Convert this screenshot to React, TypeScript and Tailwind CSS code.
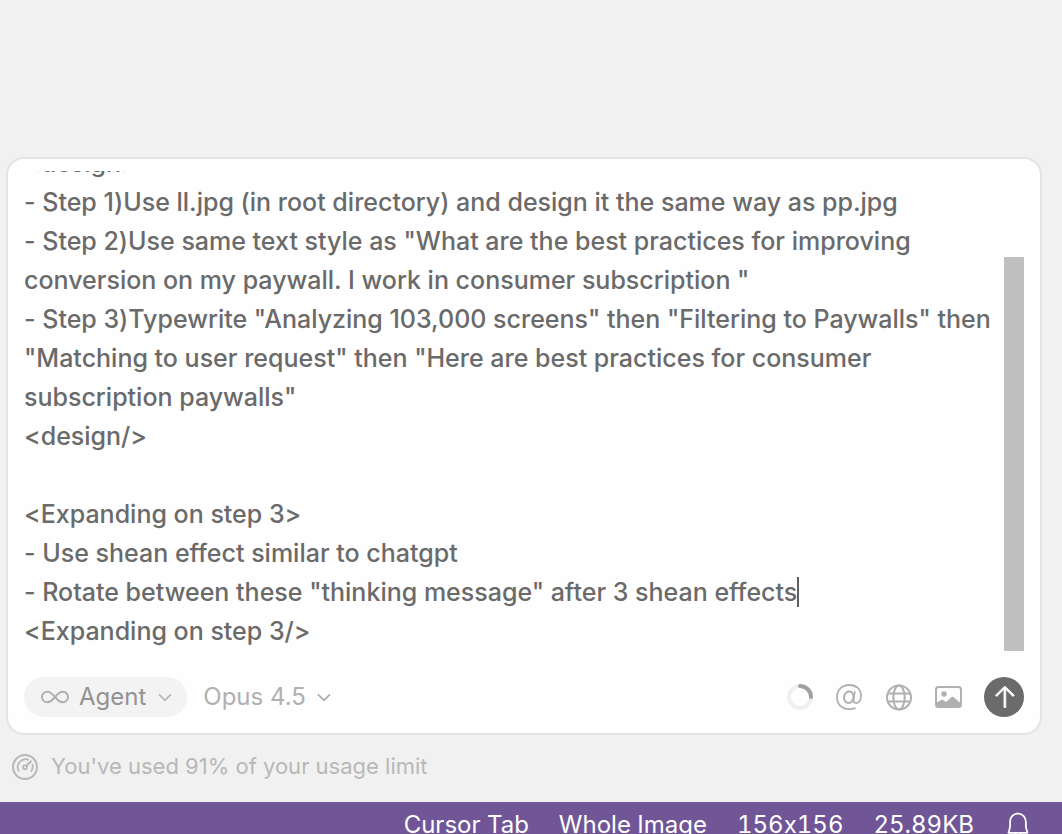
import { useLayoutEffect, useRef, useState } from "react";
import { VscArrowUp, VscBell, VscChevronDown } from "react-icons/vsc";

const PROMPT = `

<design>
- Step 1)Use ll.jpg (in root directory) and design it the same way as pp.jpg
- Step 2)Use same text style as "What are the best practices for improving conversion on my paywall. I work in consumer subscription "
- Step 3)Typewrite "Analyzing 103,000 screens" then "Filtering to Paywalls" then "Matching to user request" then "Here are best practices for consumer subscription paywalls"
<design/>

<Expanding on step 3>
- Use shean effect similar to chatgpt
- Rotate between these "thinking message" after 3 shean effects
<Expanding on step 3/>`;

const STATUS_ITEMS = ["Cursor Tab", "Whole Image", "156x156", "25.89KB"];

export default function App() {
  return (
    <div className="flex h-screen flex-col overflow-hidden bg-[#f1f1f1] pt-[157px] font-['Inter',sans-serif] [font-feature-settings:'calt'_0]">
      <main className="shrink-0 pl-[6px] pr-5">
        <Composer />
        <div className="flex h-[67px] items-center gap-3 pb-1 pl-[5px] text-[22px] text-[#b8b8b8]">
          <GaugeIcon />
          <p>You've used 91% of your usage limit</p>
        </div>
      </main>
      <StatusBar />
    </div>
  );
}

function Composer() {
  return (
    <form
      className="rounded-[18px] border-2 border-[#e4e4e4] bg-[#fefefe] px-4 pb-4 pt-3"
      onSubmit={(e) => e.preventDefault()}
    >
      <PromptInput />
      <div className="mt-[26px] flex h-10 items-center justify-between">
        <div className="flex items-center gap-4 text-[24px]">
          <button type="button" className="flex h-10 items-center gap-[9px] rounded-full bg-[#f3f3f3] pl-4 pr-3 text-[#929292]">
            <InfinityIcon />
            Agent
            <VscChevronDown className="size-[20px] text-[#b0b0b0]" strokeWidth="0.500" />
          </button>
          <button type="button" className="flex h-10 items-center gap-2 text-[#b0b0b0]">
            Opus 4.5
            <VscChevronDown className="size-[20px] text-[#a0a0a0]" strokeWidth="0.500" />
          </button>
        </div>
        <div className="flex items-center gap-[22px] text-[#b0b0b0]">
          <button type="button" aria-label="Context usage">
            <UsageRing />
          </button>
          <button type="button" aria-label="Mention">
            <MentionIcon />
          </button>
          <button type="button" aria-label="Browser">
            <GlobeIcon />
          </button>
          <button type="button" aria-label="Attach image">
            <ImageIcon />
          </button>
          <button
            type="button"
            aria-label="Send"
            className="flex size-10 items-center justify-center rounded-full bg-[#6b6b6b] text-white"
          >
            <VscArrowUp className="size-7" strokeWidth="0.500" />
          </button>
        </div>
      </div>
    </form>
  );
}

function PromptInput() {
  const ref = useRef<HTMLTextAreaElement>(null);
  const [thumb, setThumb] = useState({ top: 0, height: 0 });

  const syncThumb = () => {
    const el = ref.current;
    if (!el) return;
    const ratio = el.clientHeight / el.scrollHeight;
    setThumb({ top: el.scrollTop * ratio, height: el.clientHeight * ratio });
  };

  useLayoutEffect(() => {
    if (ref.current) ref.current.scrollTop = ref.current.scrollHeight;
    syncThumb();
  }, []);

  return (
    <div className="relative h-[480px]">
      <textarea
        ref={ref}
        aria-label="Prompt"
        defaultValue={PROMPT}
        onScroll={syncThumb}
        spellCheck={false}
        className="block size-full resize-none bg-transparent pr-5 text-[25px] font-medium leading-[39px] text-[#6a6a6a] outline-none [scrollbar-width:none]"
      />
      <span className="absolute left-[773px] top-[406px] h-[30px] w-[2px] bg-[#606060]" />
      <span
        className="absolute right-0 w-5 bg-[#c0c0c0]"
        style={{ top: thumb.top, height: thumb.height }}
      />
    </div>
  );
}

function StatusBar() {
  return (
    <footer className="flex h-[46px] shrink-0 items-center justify-end gap-[30px] bg-[#705697] pr-[30px] text-[24px] tabular-nums text-white">
      {STATUS_ITEMS.map((item) => (
        <button key={item} type="button">
          {item}
        </button>
      ))}
      <button type="button" aria-label="Notifications">
        <VscBell className="size-7" />
      </button>
    </footer>
  );
}

function InfinityIcon() {
  return (
    <svg className="h-[14px] w-[30px]" viewBox="0 0 30 14" fill="none" stroke="#b0b0b0" strokeWidth="2">
      <path d="M15 7C12.500 4 10.500 1.800 7.500 1.800C4.200 1.800 2 4 2 7s2.200 5.200 5.500 5.200C10.500 12.200 12.500 10 15 7s4.500-5.200 7.500-5.200C25.800 1.800 28 4 28 7s-2.200 5.200-5.500 5.200C19.500 12.200 17.500 10 15 7Z" />
    </svg>
  );
}

function GaugeIcon() {
  return (
    <svg className="size-[28px]" viewBox="0 0 28 28" fill="none" stroke="currentColor" strokeWidth="2">
      <circle cx="14" cy="14" r="12" />
      <path d="M8 18.500A8 8 0 0 1 18 6.900M21.300 11A8 8 0 0 1 20 18.500" strokeWidth="1.800" />
      <circle cx="14" cy="14.300" r="1.900" strokeWidth="1.800" />
      <path d="M15.400 12.800L20.500 7.700" />
    </svg>
  );
}

function MentionIcon() {
  return (
    <svg className="size-[28px]" viewBox="0 0 28 28" fill="none" stroke="currentColor" strokeWidth="1.800" strokeLinecap="round">
      <path d="M20 25.200A13.500 13.500 0 0 1 14.500 26.200C7 26.200 2 21.500 2 14.200C2 7 7 2 14.300 2C21.200 2 26 6.200 26 12.500C26 17 24 20 21.200 20C19 20 18.200 18.500 18.600 16L19.700 9" />
      <ellipse cx="13.800" cy="14.200" rx="4.700" ry="5.800" transform="rotate(12 13.800 14.200)" strokeWidth="2" />
    </svg>
  );
}

function GlobeIcon() {
  return (
    <svg className="size-[28px]" viewBox="0 0 28 28" fill="none" stroke="currentColor" strokeWidth="2">
      <circle cx="14" cy="14.500" r="12" />
      <ellipse cx="14" cy="14.500" rx="5.700" ry="12" />
      <path d="M3 10.500h22M3 18.500h22" />
    </svg>
  );
}

function UsageRing() {
  return (
    <svg className="size-[26px]" viewBox="0 0 26 26" fill="none" strokeWidth="4">
      <circle cx="13" cy="13" r="11" stroke="#f0f0f0" />
      <path d="M13 2a11 11 0 0 1 11 11" stroke="#a0a0a0" strokeLinecap="round" />
    </svg>
  );
}

function ImageIcon() {
  return (
    <svg className="h-[22px] w-[27px]" viewBox="0 0 27 22" fill="none">
      <rect x="1" y="1" width="25" height="20" rx="2.500" stroke="currentColor" strokeWidth="2" />
      <circle cx="9" cy="8" r="2.700" fill="currentColor" />
      <path d="M1 17l5-3q1-.7 2 0l3 2 5-4.500q1.500-1.300 3 0l7 6V19q0 2-2 2H3q-2 0-2-2Z" fill="currentColor" />
    </svg>
  );
}
